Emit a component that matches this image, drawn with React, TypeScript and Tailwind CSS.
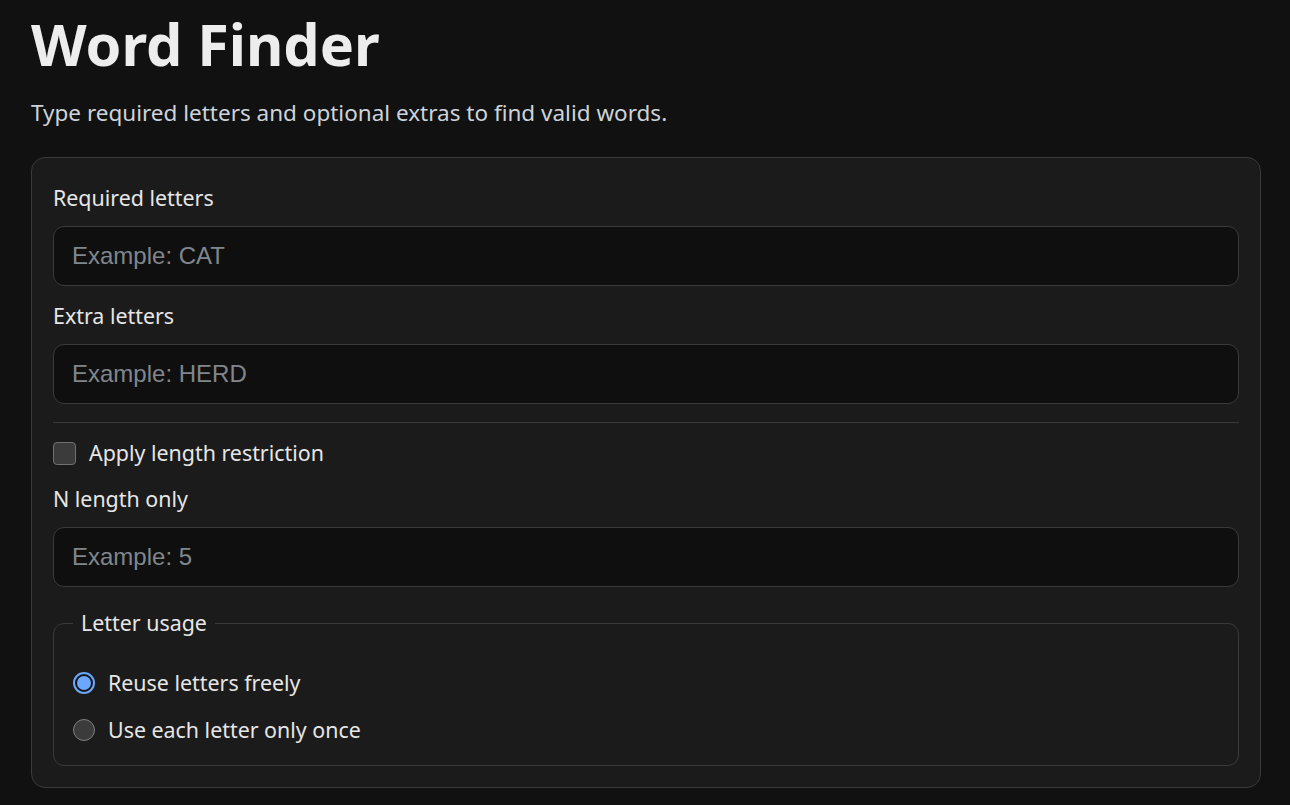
import React from 'react';

const font = { fontFamily: '"Noto Sans", "Open Sans", sans-serif' };

// Text input with dark well styling
const Field: React.FC<{ label: string; placeholder: string }> = ({ label, placeholder }) => (
  <div className="flex flex-col">
    <label className="text-[21.4px] leading-[28px] text-[#e6e6e6] mb-[14px]">{label}</label>
    <input
      placeholder={placeholder}
      className="h-[60px] w-full rounded-[11px] border border-[#3a3a3a] bg-[#0f0f0f] px-[18px] text-[24px] text-[#e6e6e6] placeholder:text-[#80868c] outline-none"
      style={{ fontFamily: '"Liberation Sans", Arial, sans-serif' }}
    />
  </div>
);

const Radio: React.FC<{ checked?: boolean; label: string }> = ({ checked, label }) => (
  <label className="flex items-center gap-[13px] text-[21.4px] leading-[28px] text-[#e6e6e6]">
    {checked ? (
      <span className="flex h-[22px] w-[22px] items-center justify-center rounded-full border-2 border-[#6aa7ff] bg-[#151515]">
        <span className="h-[14px] w-[14px] rounded-full bg-[#6aa7ff]" />
      </span>
    ) : (
      <span className="h-[22px] w-[22px] rounded-full border border-[#808080] bg-[#3b3b3b]" />
    )}
    {label}
  </label>
);

export default function App() {
  return (
    <div className="min-h-screen bg-[#111111] px-[31px] pt-[8px] pb-[20px]" style={font}>
      <h1 className="text-[57.5px] font-bold leading-[72px] text-[#ededed]">Word Finder</h1>
      <p className="mt-[18px] text-[22.5px] leading-[30px] text-[#cdd3da]">
        Type required letters and optional extras to find valid words.
      </p>

      <div className="mt-[29px] w-[1230px] rounded-[14px] border border-[#3a3a3a] bg-[#1b1b1b] px-[21px] pt-[26px] pb-[21px]">
        <div className="flex flex-col gap-[16px]">
          <Field label="Required letters" placeholder="Example: CAT" />
          <Field label="Extra letters" placeholder="Example: HERD" />
        </div>

        <div className="mt-[18px] border-t border-[#3a3a3a]" />

        <label className="mt-[16px] flex items-center gap-[13px] text-[21.4px] leading-[28px] text-[#e6e6e6]">
          <span className="h-[23px] w-[23px] rounded-[4px] border border-[#707070] bg-[#3b3b3b]" />
          Apply length restriction
        </label>

        <div className="mt-[18px]">
          <Field label="N length only" placeholder="Example: 5" />
        </div>

        <fieldset className="mt-[22px] rounded-[11px] border border-[#3a3a3a] px-[19px] pt-[32px] pb-[21px]">
          <legend className="px-[8px] text-[21.4px] leading-[28px] text-[#e6e6e6]">Letter usage</legend>
          <div className="flex flex-col gap-[19px]">
            <Radio checked label="Reuse letters freely" />
            <Radio label="Use each letter only once" />
          </div>
        </fieldset>
      </div>
    </div>
  );
}
